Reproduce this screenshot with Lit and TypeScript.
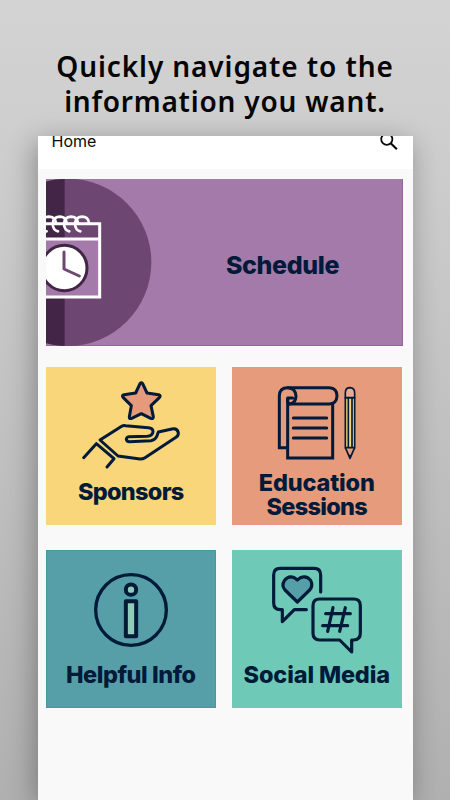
import { LitElement, html, svg, css, type TemplateResult, type SVGTemplateResult } from "lit";
import { customElement, property } from "lit/decorators.js";

const star = svg`
  <g fill="none" stroke="#001a39" stroke-width="9" stroke-linejoin="round" stroke-linecap="round">
    <path fill="#e59a7b" d="M300 70Q304 65 308 70L321 98L356 103Q364 106 358 112L333 136L340 169Q340 177 332 174L304 160L275 174Q267 177 268 169L274 136L250 112Q244 105 252 103L287 98Z"/>
    <path d="M180 239L245 198Q250 195 257 196L325 202Q339 203 339 214Q338 227 322 228L267 229Q259 231 259 237Q260 244 268 244L333 241Q345 239 350 229L355 215L396 206Q412 203 415 217Q416 226 408 231L315 292Q309 296 300 296L234 287Z"/>
    <path d="M131 292L169 250L222 295L201 320"/>
  </g>`;

const notebook = svg`
  <g fill="none" stroke="#001a39" stroke-width="9" stroke-linejoin="round" stroke-linecap="round">
    <path stroke-linejoin="miter" d="M182 262H160V107Q160 82 185 82H310Q333 83 333 107Q332 130 310 131H189"/>
    <path d="M186 82Q210 84 210 108Q209 130 189 131Q181 123 187 113H200"/>
    <path stroke-linejoin="miter" d="M185 113V293H320V132"/>
    <path d="M202 173H302M202 203H302M202 233H302"/>
  </g>
  <g stroke="#001a39" stroke-width="5" stroke-linejoin="round">
    <path fill="#f7d577" d="M358 112H386V262H358Z"/>
    <path fill="#e9aa8d" d="M358 112V96Q359 82 372 82Q386 83 386 97V112Z"/>
    <path fill="none" d="M367 112V262M378 112V262M358 262L372 294L386 262M367 286H377"/>
  </g>`;

const info = svg`
  <g fill="none" stroke="#001a39" stroke-width="10">
    <circle cx="273" cy="209" r="106"/>
    <circle cx="273" cy="148" r="15.5" fill="#91ccbb" stroke-width="12"/>
    <rect x="257.500" y="182.500" width="31" height="105" fill="#91ccbb" stroke-width="12" stroke-linejoin="round"/>
  </g>`;

const chat = svg`
  <g fill="none" stroke="#001a39" stroke-width="9.5" stroke-linejoin="round" stroke-linecap="round">
    <path d="M284 155V104Q284 84 264 84H163Q143 84 143 104V188Q143 208 163 208H169V244L205 208H241"/>
    <path fill="#569fa9" d="M214 185L177 149Q166 136 175 121Q187 104 205 112L214 119L223 112Q242 104 254 120Q262 136 251 149Z"/>
    <path d="M281 176H383Q403 176 403 196V279Q403 299 383 299H377V335L341 299H281Q261 299 261 279V196Q261 176 281 176Z"/>
    <path d="M321 202L305 273M358 202L341 273M299 220H373M290 256H365"/>
  </g>`;

@customElement("nav-tile")
export class NavTile extends LitElement {
  @property() tone = "";
  @property({ attribute: false }) icon?: SVGTemplateResult;
  @property({ attribute: false }) lines: string[] = [];

  static styles = css`
    :host { display: block; }
    .tile {
      box-sizing: border-box; height: 158.5px; overflow: hidden;
      color: #001a39; text-align: center;
      font: 800 23.5px/24px Inter, sans-serif;
    }
    .icon { display: block; width: 169.5px; height: 102px; overflow: visible; }
    .label { display: block; white-space: nowrap; margin-top: 11px; }
    .sponsors { background: #f9d67a; }
    .sponsors .label { letter-spacing: -0.7px; }
    .education { background: #e59b7c; }
    .education .label { margin-top: 2.5px; line-height: 23.5px; letter-spacing: -0.15px; }
    .education .label + .label { margin-top: 0; letter-spacing: -0.7px; }
    .helpful { background: #569fa9; box-shadow: inset 0 0 0 1px #4499a3; }
    .helpful .label { letter-spacing: -0.45px; }
    .social { background: #6fc9b7; }
    .social .label { letter-spacing: -0.15px; }
  `;

  render(): TemplateResult {
    const top = this.tone === "helpful" || this.tone === "social" ? 29 : 20;
    return html`<div class="tile ${this.tone}">
      <svg class="icon" viewBox="18 ${top} 508.5 306">${this.icon}</svg>
      ${this.lines.map((l) => html`<span class="label">${l}</span>`)}
    </div>`;
  }
}

@customElement("app-root")
export class AppRoot extends LitElement {
  static styles = css`
    :host {
      display: flex; flex-direction: column; width: 450px; height: 800px; overflow: hidden;
      background: linear-gradient(#d3d3d3, #cecece 17%, #b0b0b0);
    }
    .headline {
      box-sizing: border-box; flex: none; height: 136px; margin: 0; padding-top: 49px;
      text-align: center; color: #050505;
      font: 600 28px/35px "Noto Sans", sans-serif;
    }
    .row { display: block; white-space: nowrap; }
    .first { letter-spacing: 0.9px; }
    .second { letter-spacing: 0.8px; }
    .phone {
      flex: 1; width: 375px; margin-left: 37.5px; background: #f9f9f9;
      box-shadow: -3px 6px 26px rgba(0, 0, 0, 0.32);
    }
    .bar {
      display: flex; justify-content: space-between; height: 33px; overflow: hidden;
      box-sizing: border-box; padding: 0 14px; background: #fff;
      font: 400 16px/20px Inter, sans-serif; color: #0a0a0a;
    }
    .title { margin-top: -5px; }
    .search { width: 20px; height: 17px; }
    .body { padding: 10px 0 0 8.5px; }
    .schedule {
      display: flex; align-items: center; width: 357px; height: 167px; overflow: hidden;
      background: #a47aaa; box-shadow: inset -1px -1px 0 #9960a0;
    }
    .art { flex: none; width: 110px; height: 167px; }
    .name {
      margin: 5px 0 0 70px; color: #001a39; letter-spacing: -0.4px;
      font: 800 25px/30px Inter, sans-serif;
    }
    .grid {
      display: grid; grid-template-columns: 169.5px 169.5px; gap: 24.5px 16.5px;
      margin-top: 20.5px;
    }
  `;

  render(): TemplateResult {
    return html`
      <h1 class="headline">
        <span class="row first">Quickly navigate to the</span>
        <span class="row second">information you want.</span>
      </h1>
      <main class="phone">
        <header class="bar">
          <span class="title">Home</span>
          <svg class="search" viewBox="0 0 20 17" fill="none" stroke="#0a0a0a" stroke-width="1.8">
            <circle cx="7.800" cy="3.200" r="5.600"/>
            <path stroke-width="2.200" d="M11.700 7.200L17.900 13.300"/>
          </svg>
        </header>
        <section class="body">
          <div class="schedule">
            <svg class="art" viewBox="30 27 330 501">
              <circle cx="95" cy="277" r="251" fill="#6d4772"/>
              <path fill="#432547" d="M30 35Q55 27 86 27V528Q55 527 30 519Z"/>
              <path fill="#a47aaa" d="M20 210H190V380H20Z"/>
              <g fill="none" stroke="#fff" stroke-width="9">
                <path d="M20 161H191V381H20M20 207H191"/>
                <g stroke-width="8" stroke-linecap="round">
                  <path d="M60 158Q57 140 38 140Q16 142 16 162Q17 181 32 184"/>
                  <path d="M92 158Q89 140 71 140Q50 142 50 162Q51 181 66 184"/>
                  <path d="M126 158Q123 140 105 140Q84 142 84 162Q85 181 100 184"/>
                  <path d="M159 158Q156 140 138 140Q117 142 117 162Q118 181 133 184"/>
                </g>
              </g>
              <circle cx="85" cy="294" r="68" fill="#fff" stroke="#432547" stroke-width="9"/>
              <path fill="none" stroke="#6d4772" stroke-width="9" stroke-linecap="round" stroke-linejoin="round" d="M84 246V297L130 318"/>
            </svg>
            <span class="name">Schedule</span>
          </div>
          <div class="grid">
            <nav-tile tone="sponsors" .icon=${star} .lines=${["Sponsors"]}></nav-tile>
            <nav-tile tone="education" .icon=${notebook} .lines=${["Education", "Sessions"]}></nav-tile>
            <nav-tile tone="helpful" .icon=${info} .lines=${["Helpful Info"]}></nav-tile>
            <nav-tile tone="social" .icon=${chat} .lines=${["Social Media"]}></nav-tile>
          </div>
        </section>
      </main>
    `;
  }
}
